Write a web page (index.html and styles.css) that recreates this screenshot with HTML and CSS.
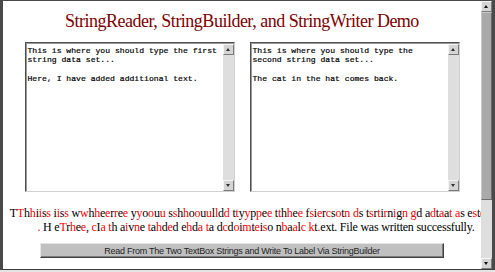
FILE: index.html
```html
<!DOCTYPE html>
<html lang="en">
  <head>
    <meta charset="UTF-8" />
    <title>StringReader, StringBuilder, and StringWriter Demo</title>
    <link rel="stylesheet" href="styles.css">
  </head>
  <body>
    <div class="window">
      <main class="page">
        <h1 class="title">StringReader, StringBuilder, and StringWriter Demo</h1>

        <div class="inputs">
          <div class="textbox">
            <textarea id="firstText" class="textbox-input" spellcheck="false">This is where you should type the first string data set...

Here, I have added additional text.</textarea>
            <div class="bar">
              <span class="arrow up"></span>
              <span class="track"></span>
              <span class="arrow down"></span>
            </div>
          </div>
          <div class="textbox">
            <textarea id="secondText" class="textbox-input" spellcheck="false">This is where you should type the second string data set...

The cat in the hat comes back.</textarea>
            <div class="bar">
              <span class="arrow up"></span>
              <span class="track"></span>
              <span class="arrow down"></span>
            </div>
          </div>
        </div>

        <p id="result" class="result"></p>

        <button id="buildBtn" class="build-btn">Read From The Two TextBox Strings and Write To Label Via StringBuilder</button>
      </main>

      <div class="bar window-bar">
        <span class="arrow up"></span>
        <span class="thumb"></span>
        <span class="track"></span>
        <span class="arrow down"></span>
      </div>
    </div>

    <script src="script.js"></script>
  </body>
</html>
```

FILE: styles.css
```css
body {
  margin: 0;
  background: #e4e4e4;
}

.window {
  width: 495px;
  height: 270px;
  box-sizing: border-box;
  display: flex;
  border-top: 1px solid #4a4a4a;
  border-left: 3px solid #4a4a4a;
  border-right: 3px solid #4a4a4a;
  border-bottom: 1px solid #3a3a3a;
  background: white;
}

.page {
  flex: 1;
  min-width: 0;
  overflow: hidden;
  padding-top: 9px;
}

.title {
  margin: 0;
  font-family: 'Liberation Serif', serif;
  font-size: 18px;
  line-height: 22px;
  letter-spacing: -0.5px;
  font-weight: normal;
  color: #800000;
  text-align: center;
}

.inputs {
  display: flex;
  justify-content: center;
  gap: 15px;
  margin-top: 10px;
}

.textbox {
  display: flex;
  width: 210px;
  height: 150px;
  box-sizing: border-box;
  border: 1px solid;
  border-color: #505050 #d0d0d0 #d0d0d0 #505050;
  box-shadow: inset 1px 1px #9a9a9a;
  padding: 1px 0 0 1px;
  background: white;
}

.textbox-input {
  flex: 1;
  min-width: 0;
  margin: 0;
  padding: 2px 2px 0 1px;
  border: none;
  outline: none;
  resize: none;
  overflow: hidden;
  font-family: 'Liberation Mono', monospace;
  font-size: 8.1px;
  line-height: 9.4px;
  color: #000;
  -webkit-text-stroke: 0.2px #000;
  background: white;
}

.bar {
  display: flex;
  flex-direction: column;
  width: 11px;
  flex-shrink: 0;
  background: #dcdcdc;
}

.arrow {
  position: relative;
  height: 11px;
  flex-shrink: 0;
  box-sizing: border-box;
  border: 1px solid;
  border-color: #f4f4f4 #7a7a7a #7a7a7a #f4f4f4;
  background: #d4d4d4;
}

.arrow::before {
  content: '';
  position: absolute;
  left: 2px;
  top: 3px;
  border-left: 2.5px solid transparent;
  border-right: 2.5px solid transparent;
}

.arrow.up::before {
  border-bottom: 3px solid #303030;
}

.arrow.down::before {
  border-top: 3px solid #303030;
}

.track {
  flex: 1;
  background: #dedede;
}

.window-bar {
  width: 11px;
  background: #e2e2e2;
}

.window-bar .arrow::before {
  border-bottom-color: #111;
  border-top-color: #111;
}

.window-bar .thumb {
  height: 188px;
  flex-shrink: 0;
  box-sizing: border-box;
  border: 1px solid;
  border-color: #c8c8c8 #6c6c6c #6c6c6c #c8c8c8;
  background: #a9a9a9;
}

.result {
  width: 496px;
  margin: 14px 0 0 5px;
  font-family: 'Liberation Serif', serif;
  font-size: 12px;
  line-height: 14px;
  letter-spacing: -0.22px;
  color: black;
  text-align: center;
}

.result .second {
  color: #ff0000;
}

.build-btn {
  display: block;
  width: 404px;
  height: 15px;
  margin: 9px 0 0 37px;
  padding: 0;
  border: 1px solid;
  border-color: #e6e6e6 #404040 #404040 #e6e6e6;
  box-shadow: inset -1px -1px #7c7c7c;
  background: #c0c0c0;
  font-family: 'Liberation Sans', Arial, sans-serif;
  font-size: 9px;
  letter-spacing: -0.25px;
  color: #222;
  cursor: pointer;
}
```

FILE: script.js
```js
function buildResult() {
  const first = document.getElementById('firstText').value
  const second = document.getElementById('secondText').value
  const result = document.getElementById('result')
  const longest = Math.max(first.length, second.length)

  result.textContent = ''

  // interleave the two strings, one character from each
  for (let i = 0; i < longest; i++) {
    if (i < first.length) result.append(first[i])
    if (i < second.length) {
      const span = document.createElement('span')
      span.className = 'second'
      span.textContent = second[i]
      result.append(span)
    }
  }

  result.append(' File was written successfully.')
}

document.getElementById('buildBtn').addEventListener('click', buildResult)
buildResult()
```
